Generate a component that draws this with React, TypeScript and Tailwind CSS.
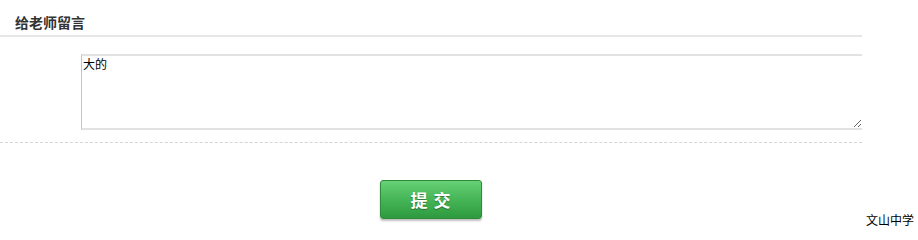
import React from "react"

const cjk = { fontFamily: '"SimSun", "Noto Sans CJK SC", sans-serif' }

export default function App() {
    return (
        <div className="flex h-[229px] w-[918px] bg-white text-[12px] text-black" style={cjk}>
            {/* 左侧留言区 */}
            <div className="w-[862px] flex-none">
                <div className="h-[37px] border-b-2 border-[#e6e6e6] pl-[15px] pt-[14px]">
                    <h3 className="text-[14px] font-bold leading-[16px] text-[#333]">给老师留言</h3>
                </div>

                <div className="overflow-hidden pl-[81px] pt-[17px]">
                    <textarea
                        defaultValue="大的"
                        className="block h-[76px] w-full resize-y border-y-2 border-l border-r-0 border-y-[#e2e2e2] border-l-[#c4c4c4] px-[1px] py-0 text-[12px] leading-[15px] text-black outline-none"
                        style={cjk}
                    />
                </div>

                <div className="mt-[12px] border-t border-dashed border-[#d4d4d4]" />

                <div className="flex justify-center pt-[37px]">
                    <button className="h-[39px] w-[102px] rounded-[3px] border border-[#2f8a3c] bg-gradient-to-b from-[#66d176] via-[#45b556] to-[#2e9a40] text-[17px] font-bold tracking-[1px] text-white shadow-[0_2px_2px_rgba(0,0,0,0.25)] [text-shadow:0_1px_1px_rgba(0,0,0,0.35)]">
                        提 交
                    </button>
                </div>
            </div>

            {/* 页脚 */}
            <div className="flex flex-1 items-end pb-[2px] pl-[4px]">
                <span className="text-[12px] leading-[14px]">文山中学</span>
            </div>
        </div>
    )
}
